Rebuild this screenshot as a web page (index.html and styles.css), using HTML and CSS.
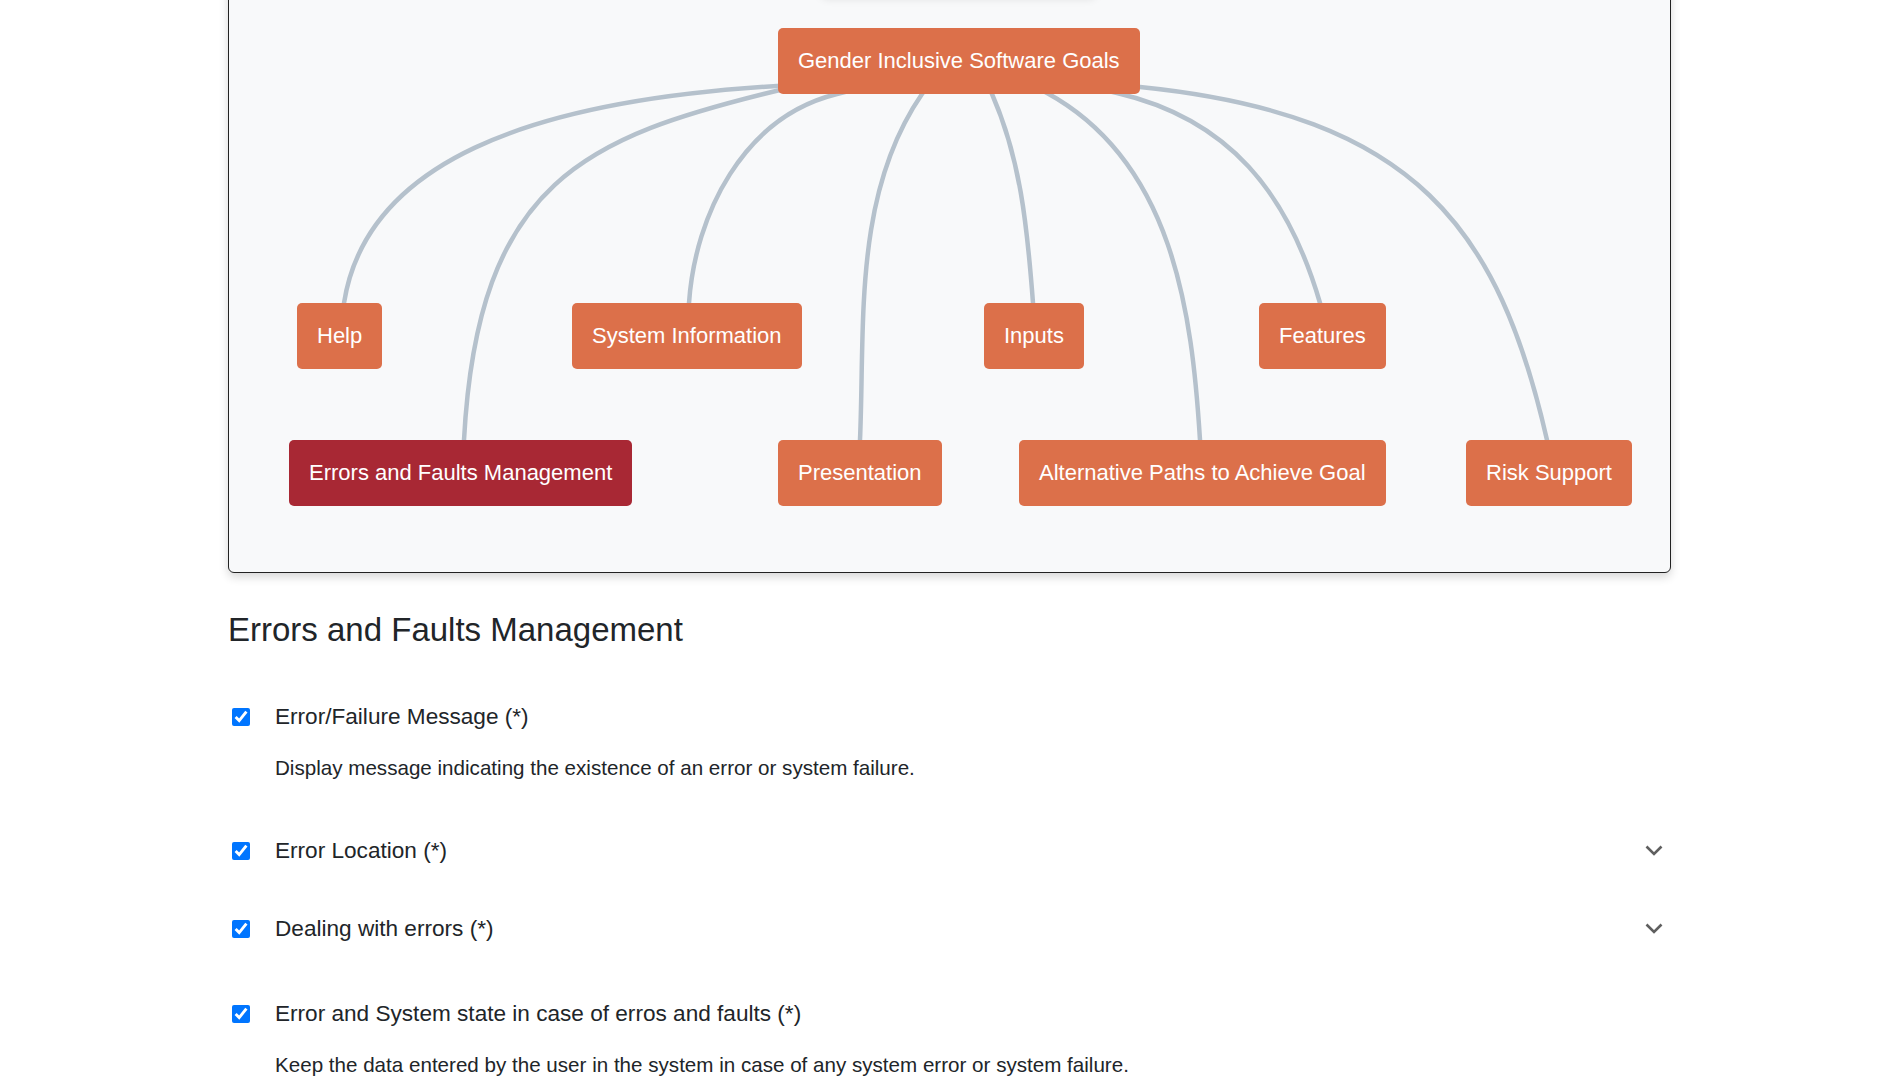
FILE: index.html
```html
<!DOCTYPE html>
<html lang="en">
<head>
<meta charset="utf-8">
<title>Gender Inclusive Software Goals</title>
<link rel="stylesheet" href="styles.css">
</head>
<body>
<main class="page">
  <section class="diagram">
    <div class="diagram-toolbar"></div>
    <svg class="edges" xmlns="http://www.w3.org/2000/svg" aria-hidden="true">
      <g transform="translate(-229 19)">
        <path d="M792,85 L777,86 C527,101 366,163 344,303 L343,311"/>
        <path d="M795,86.5 L780,90 C586,137 478,180 464,440 L463.6,448"/>
        <path d="M851.6,90.4 L837,94 C743,117 695,215 689,303 L688.5,311"/>
        <path d="M929,84 L922,94 C853,194 865,323 860,440 L860,448"/>
        <path d="M987,83 L992,94 C1020,158 1027,223 1033,303 L1033.6,311"/>
        <path d="M1036.5,87.2 L1047,93 C1173,162 1192,312 1200,440 L1200.5,448"/>
        <path d="M1105.3,90.3 L1117,93 C1229,119 1288,193 1320,303 L1322.2,310.7"/>
        <path d="M1128,85.8 L1140,87 C1417,115 1499,230 1547,440 L1548.8,447.8"/>
      </g>
    </svg>
    <div class="node" style="left:549px;top:47px">Gender Inclusive Software Goals</div>
    <div class="node" style="left:68px;top:322px">Help</div>
    <div class="node" style="left:343px;top:322px">System Information</div>
    <div class="node" style="left:755px;top:322px">Inputs</div>
    <div class="node" style="left:1030px;top:322px">Features</div>
    <div class="node node-active" style="left:60px;top:459px">Errors and Faults Management</div>
    <div class="node" style="left:549px;top:459px">Presentation</div>
    <div class="node" style="left:790px;top:459px">Alternative Paths to Achieve Goal</div>
    <div class="node" style="left:1237px;top:459px">Risk Support</div>
  </section>

  <h2 class="section-title">Errors and Faults Management</h2>

  <ul class="goal-list">
    <li class="goal goal-open">
      <div class="goal-head">
        <input class="goal-check" type="checkbox" checked>
        <span class="goal-label">Error/Failure Message (*)</span>
      </div>
      <p class="goal-desc">Display message indicating the existence of an error or system failure.</p>
    </li>
    <li class="goal">
      <div class="goal-head">
        <input class="goal-check" type="checkbox" checked>
        <span class="goal-label">Error Location (*)</span>
        <svg class="chev" viewBox="0 0 18 11" xmlns="http://www.w3.org/2000/svg"><polyline points="1.5,1.5 9,9 16.5,1.5"/></svg>
      </div>
    </li>
    <li class="goal">
      <div class="goal-head">
        <input class="goal-check" type="checkbox" checked>
        <span class="goal-label">Dealing with errors (*)</span>
        <svg class="chev" viewBox="0 0 18 11" xmlns="http://www.w3.org/2000/svg"><polyline points="1.5,1.5 9,9 16.5,1.5"/></svg>
      </div>
    </li>
    <li class="goal goal-open">
      <div class="goal-head">
        <input class="goal-check" type="checkbox" checked>
        <span class="goal-label">Error and System state in case of erros and faults (*)</span>
      </div>
      <p class="goal-desc">Keep the data entered by the user in the system in case of any system error or system failure.</p>
    </li>
  </ul>
</main>
</body>
</html>
```

FILE: styles.css
```css
* {
  box-sizing: border-box;
}

html, body {
  margin: 0;
  padding: 0;
  background: #ffffff;
}

body {
  font-family: "Liberation Sans", Arial, Helvetica, sans-serif;
  color: #212529;
}

.page {
  width: 1443px;
  margin: 0 auto;
}

/* ---------- diagram ---------- */
.diagram {
  position: relative;
  height: 593px;
  margin-top: -20px;
  background: #f8f9fa;
  border: 1px solid #222;
  border-radius: 6px;
  box-shadow: 0 4px 10px rgba(0, 0, 0, 0.16);
}

.diagram-toolbar {
  position: absolute;
  left: 591px;
  top: 0;
  width: 277px;
  height: 16px;
  background: #f8f9fa;
  border-radius: 8px;
  box-shadow: 0 2px 8px rgba(0, 0, 0, 0.10);
}

.edges {
  position: absolute;
  left: 0;
  top: 0;
  width: 100%;
  height: 100%;
  overflow: visible;
}

.edges path {
  fill: none;
  stroke: #b5c1cc;
  stroke-width: 4.5;
  stroke-linejoin: round;
}

.node {
  position: absolute;
  padding: 20px;
  font-size: 22px;
  line-height: 26px;
  color: #ffffff;
  background: #dc704a;
  border-radius: 5px;
  white-space: nowrap;
}

.node-active {
  background: #a82834;
}

/* ---------- section ---------- */
.section-title {
  margin: 37px 0 21px;
  font-size: 33px;
  font-weight: 400;
  line-height: 1.2;
  color: #212529;
}

.goal-list {
  list-style: none;
  margin: 0;
  padding: 0;
}

.goal {
  padding: 19px 0;
}

.goal-open {
  padding: 26px 0 32px;
}

.goal-head {
  display: flex;
  align-items: center;
  height: 40px;
}

.goal-check {
  width: 18px;
  height: 18px;
  margin: 0 0 0 4px;
  accent-color: #0075ff;
  flex: none;
}

.goal-label {
  flex: 1;
  margin-left: 25px;
  font-size: 22.6px;
  color: #212529;
}

.chev {
  width: 18px;
  height: 11px;
  margin-right: 8px;
  flex: none;
}

.chev polyline {
  fill: none;
  stroke: #5f5f5f;
  stroke-width: 2.6;
}

.goal-desc {
  margin: 19px 0 0 47px;
  font-size: 20.6px;
  line-height: 24px;
  color: #212529;
}
```
